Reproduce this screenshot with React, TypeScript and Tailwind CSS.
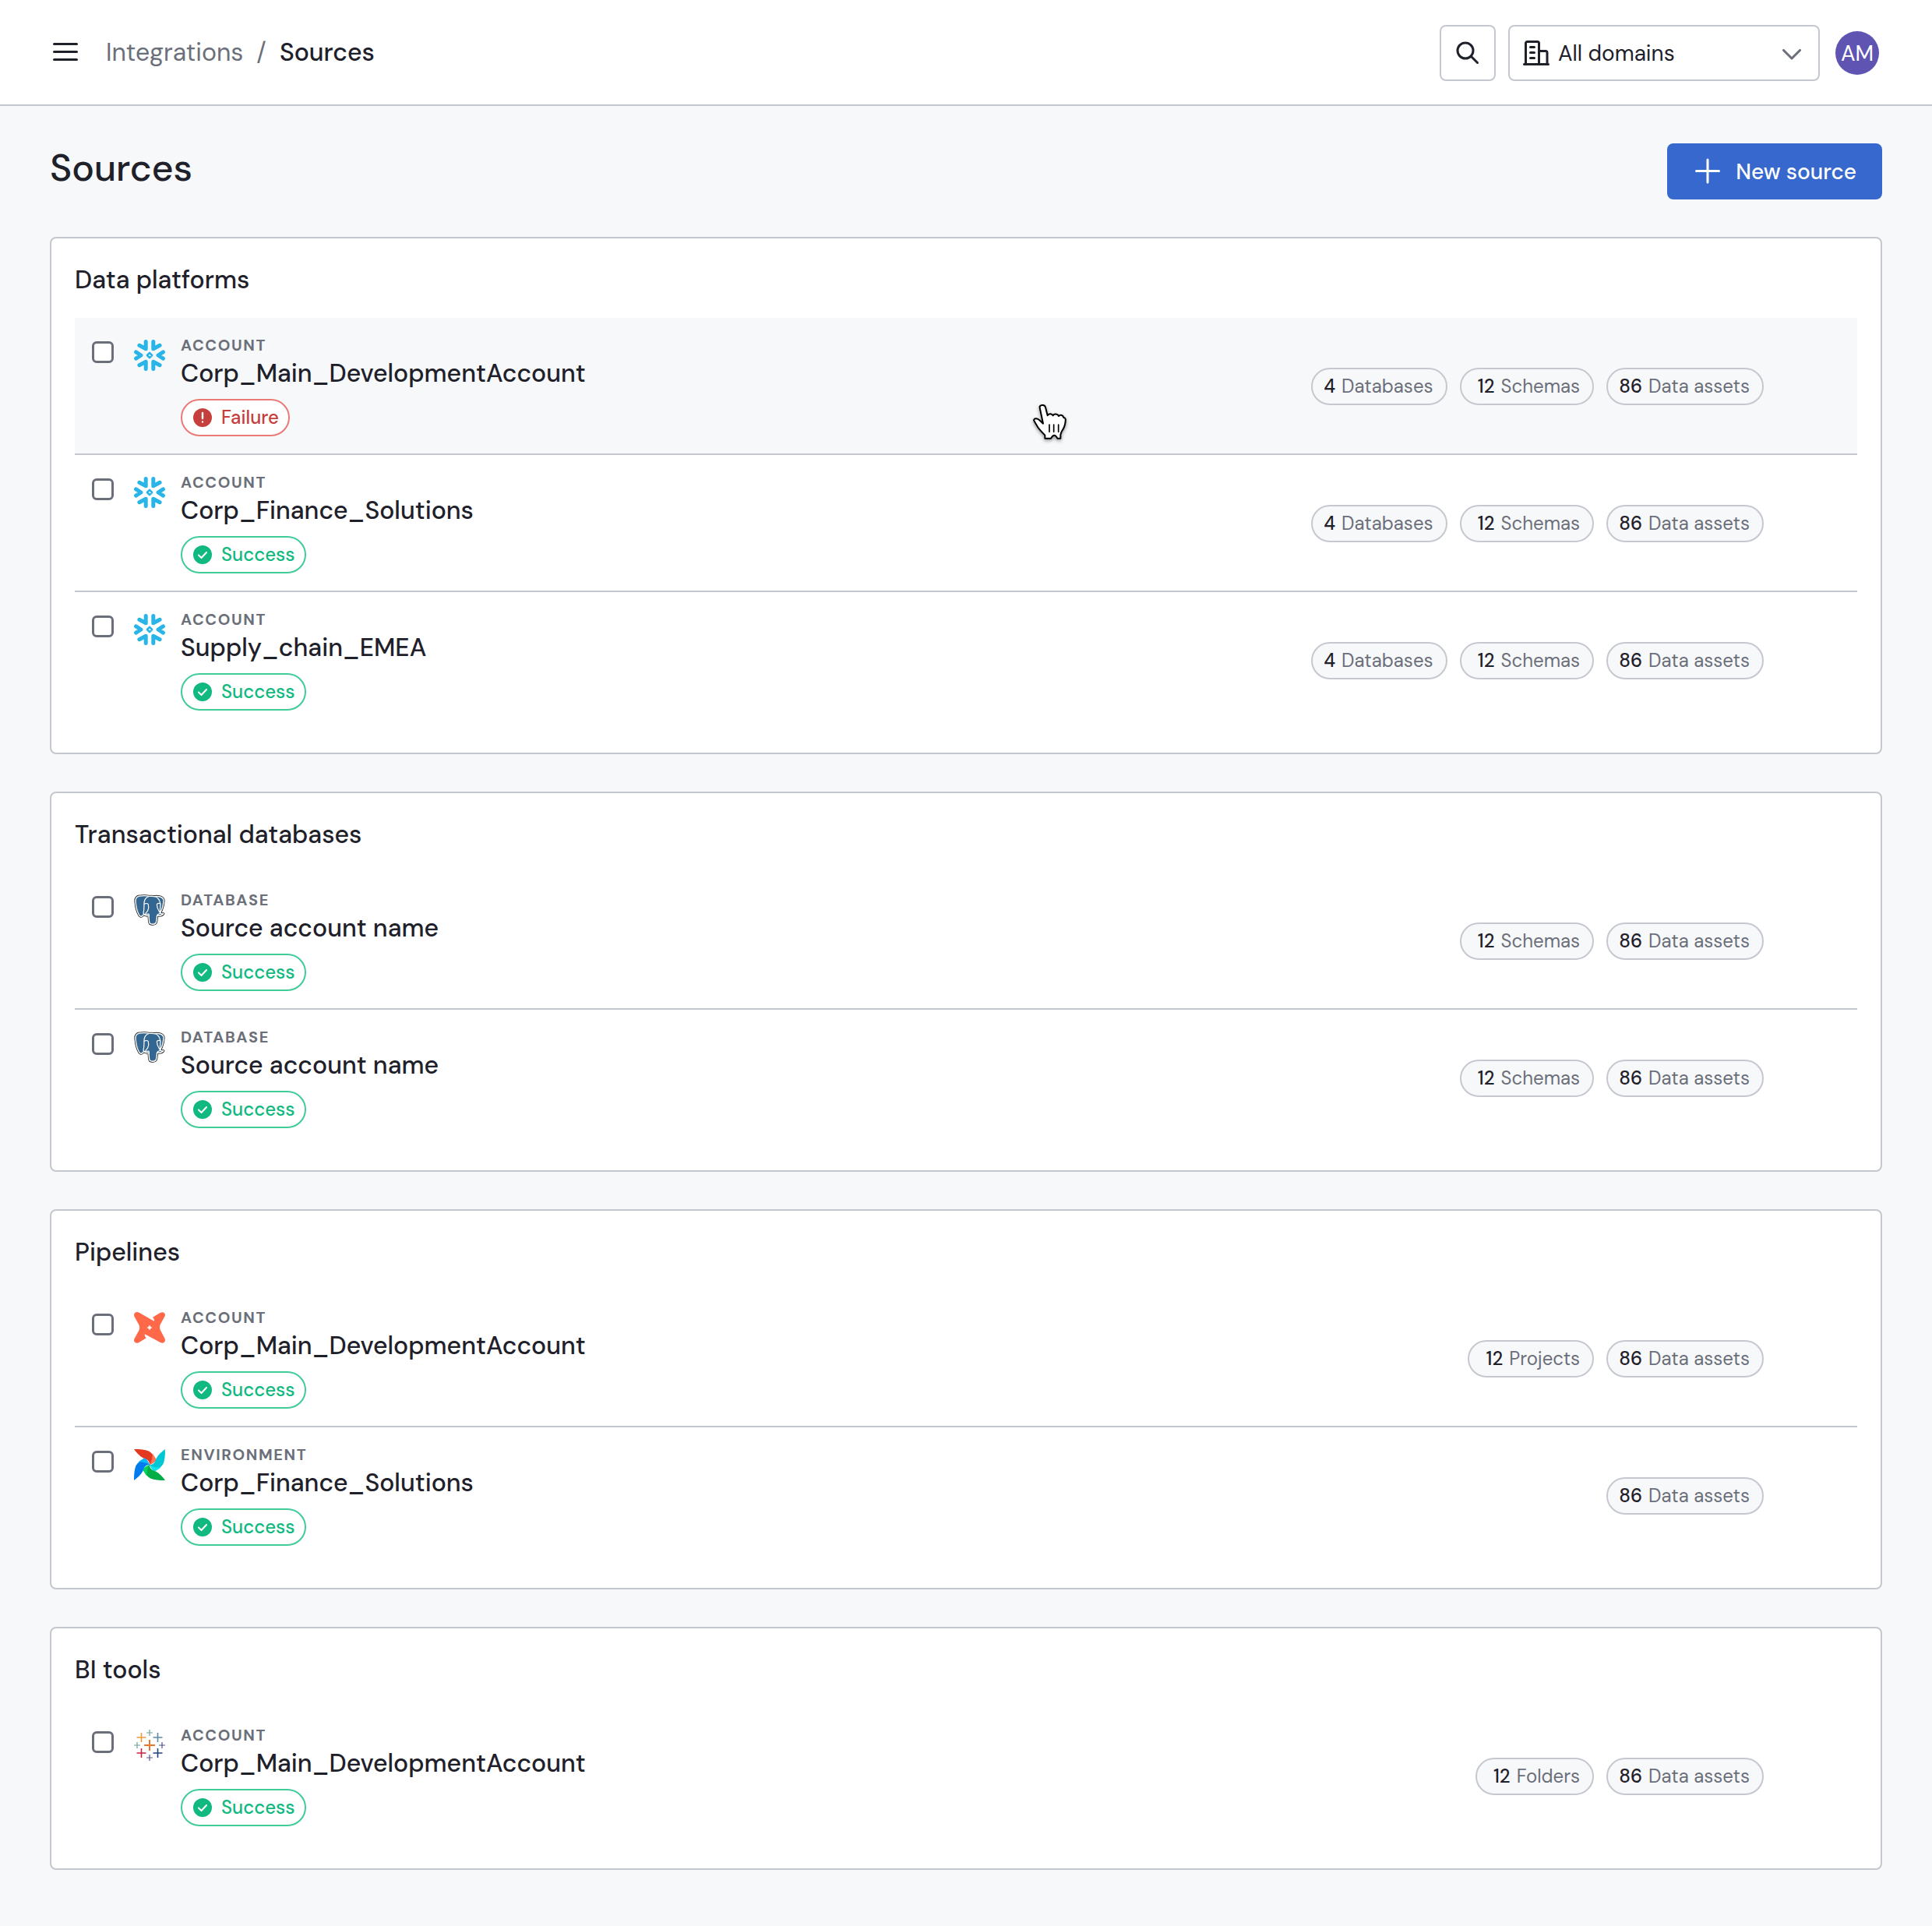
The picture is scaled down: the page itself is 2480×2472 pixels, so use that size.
import React from 'react';

type Status = 'Success' | 'Failure';
type Count = [number, string];
type Source = {
  kind: string;
  name: string;
  status: Status;
  logo: React.ReactNode;
  counts: Count[];
  hovered?: boolean;
};

function SnowflakeLogo() {
  return (
    <svg viewBox="0 0 40 40" className="size-10" fill="none" stroke="#29b5e8" strokeLinecap="round" strokeLinejoin="round" aria-hidden="true">
      <path
        strokeWidth="5"
        d="M15.200 2.500V11.800L6.900 7.300M24.800 2.500V11.800l8.300-4.500M15.200 37.500V28.200L6.900 32.700M24.800 37.500V28.200l8.300 4.500M2.600 15.900 9 20l-6.400 4.100M37.400 15.900 31 20l6.400 4.100"
      />
      <path strokeWidth="2.600" d="m20 16.900 3.100 3.100-3.100 3.100-3.100-3.100Z" />
    </svg>
  );
}

function DbtLogo() {
  return (
    <svg viewBox="0 0 40 40" className="size-10" aria-hidden="true">
      <path
        fill="#ff694a"
        d="M6.200.6 25.800 11.800C26.200 10 25.600 8.200 24 6.800L34 .8c3.800-2 7.400 1.200 5.400 5L34 15.500c-1.300 2.500-1.300 5.500 0 8l5.400 10.200c2 3.800-1.400 7.400-5.200 5.600L13.900 28.200c-.4 1.800.2 3.600 1.900 5L6 39.200c-3.800 2-7.400-1.400-5.400-5.200L6.200 24c1.300-2.500 1.300-5.500 0-8L.6 6C-1.400 2.200 2.400-1.400 6.200.6Z"
      />
      <path fill="#fff" d="M20 17.200c.5 1.500 1.300 2.300 2.800 2.800-1.500.5-2.300 1.300-2.800 2.800-.5-1.500-1.300-2.300-2.800-2.800 1.500-.5 2.300-1.300 2.800-2.800Z" stroke="#fff" strokeWidth=".8" />
    </svg>
  );
}

function PostgresLogo() {
  return (
    <svg viewBox="0 0 40 40" className="size-10" aria-hidden="true">
      <defs>
        <path
          id="pg-body"
          d="M20 2.4C15 1.2 10 1.6 6 2.3 2.6 3.3 1.6 6.5 2 10c.6 6 2.4 13 5 17.2 1.2 1.6 2.8 1.2 4 0l2-1.9c1.3 1.9 3.7 2.4 6 2 .5 3.6-.2 7.6 1.5 10 1.7 1.5 6 1.3 7.6-.8 1.4-2.6 1-6.7 1.5-9.5 3 .4 6.900-.2 8.200-2.300-1.700.3-3.300.1-4.300-.7 2.700-4.500 5-12.500 4.400-17.500-1.800-4-8-4.600-12-3.800-2-.6-4-.6-5.900-.3Z"
        />
      </defs>
      <use href="#pg-body" fill="#000" stroke="#1b1b1b" strokeWidth="3" strokeLinejoin="round" />
      <use href="#pg-body" fill="#336791" stroke="#fff" strokeWidth="1.4" strokeLinejoin="round" />
      <g fill="none" stroke="#fff" strokeWidth="1.2" strokeLinecap="round">
        <path d="M18.500 2.800C14 4.500 13 8 13 12c-.2 4 .2 8-.9 11-.4 1.500.3 2.300 1.200 2.800" />
        <path d="M27 2.500c3.500 1.500 6 5 6.800 9 .4 3-.4 5-.3 8 0 2 .4 3 .2 4.500" />
        <path d="M13.300 12.200c2-.9 4.400-.7 5 .6.900 3 .5 5.500-.6 8-.8 2-2.500 2-2.700 4" />
        <path d="M33.500 11.600c-2-.4-4 .2-4.100 1.300 0 3.600 1.200 6 2.600 8.300.7 1.200 1.400 2 1.600 3" />
        <path d="M13.500 25.400c2 .4 4-.4 5.500-.2.600.6.300 1.600.3 2.500M29.800 27.500c-.1-1.500.5-2.400 3.700-3.200" />
      </g>
    </svg>
  );
}

const blades = [
  { turn: 0, dark: '#e43921', light: '#ff7557' },
  { turn: 90, dark: '#00c7d4', light: '#11e1ee' },
  { turn: 180, dark: '#00ad46', light: '#04d659' },
  { turn: 270, dark: '#017cee', light: '#0cb6ff' },
];

function AirflowLogo() {
  return (
    <svg viewBox="0 0 40 40" className="size-10" aria-hidden="true">
      {blades.map((b) => (
        <g key={b.turn} transform={`rotate(${b.turn} 20 20)`}>
          <path fill={b.dark} d="M0 0c8 0 14 .5 19 2.500 4 2.200 7 7 9.500 11-1 2.800-5 4.800-8.500 6.500 0-5-3-7-8-8.500C7 9 3 4 0 0Z" />
          <path fill={b.light} d="M23.500 5.300c1.800 2.200 3.500 5.500 5 8.200-1 2.800-5 4.800-8.500 6.500 2.800-4 4-9 3.500-14.700Z" />
        </g>
      ))}
    </svg>
  );
}

const crosses = [
  { x: 20, y: 20, arm: 7, w: 2, color: '#eb762c' },
  { x: 9.5, y: 10, arm: 6, w: 1.6, color: '#ee9a3a' },
  { x: 30.5, y: 10, arm: 6, w: 1.6, color: '#5b8ba5' },
  { x: 9.5, y: 30, arm: 6, w: 1.6, color: '#c8243f' },
  { x: 30.5, y: 30, arm: 6, w: 1.6, color: '#1f457f' },
  { x: 20, y: 4, arm: 4, w: 1.2, color: '#6f9da3' },
  { x: 4, y: 20, arm: 4, w: 1.2, color: '#6f9da3' },
  { x: 36, y: 20, arm: 4, w: 1.2, color: '#4a548a' },
  { x: 20, y: 36, arm: 4, w: 1.2, color: '#54578f' },
];

function TableauLogo() {
  return (
    <svg viewBox="0 0 40 40" className="size-10" aria-hidden="true">
      {crosses.map((c) => (
        <path
          key={`${c.x}-${c.y}`}
          d={`M${c.x - c.arm} ${c.y}h${c.arm * 2}M${c.x} ${c.y - c.arm}v${c.arm * 2}`}
          stroke={c.color}
          strokeWidth={c.w}
        />
      ))}
    </svg>
  );
}

function HandCursor() {
  return (
    <svg
      viewBox="72 84 144 144"
      className="pointer-events-none absolute top-[110px] left-1/2 ml-[84px] size-12 drop-shadow-[0_2px_2px_rgba(0,0,0,0.4)]"
      aria-hidden="true"
    >
      <path
        d="M104 100C101 88 123 86 126 98L134 130C138 121 151 122 155 130 160 122 173 123 177 132 184 125 194 129 196 138 203 138 204 145 203 152 202 168 196 181 188 192L184 204V218H172Q166 206 160 206 154 206 147 218H124V206C112 194 98 180 92 167 88 160 82 152 81 147 84 139 96 141 103 148L117 161Z"
        fill="#fff"
        stroke="#000"
        strokeWidth="6"
        strokeLinejoin="round"
      />
      <path d="M141 165v28M158 165v28M176 165v28" stroke="#000" strokeWidth="5" strokeLinecap="round" />
    </svg>
  );
}

const platformCounts: Count[] = [[4, 'Databases'], [12, 'Schemas'], [86, 'Data assets']];
const databaseCounts: Count[] = [[12, 'Schemas'], [86, 'Data assets']];

const sections: { title: string; sources: Source[] }[] = [
  {
    title: 'Data platforms',
    sources: [
      { kind: 'Account', name: 'Corp_Main_DevelopmentAccount', status: 'Failure', logo: <SnowflakeLogo />, counts: platformCounts, hovered: true },
      { kind: 'Account', name: 'Corp_Finance_Solutions', status: 'Success', logo: <SnowflakeLogo />, counts: platformCounts },
      { kind: 'Account', name: 'Supply_chain_EMEA', status: 'Success', logo: <SnowflakeLogo />, counts: platformCounts },
    ],
  },
  {
    title: 'Transactional databases',
    sources: [
      { kind: 'Database', name: 'Source account name', status: 'Success', logo: <PostgresLogo />, counts: databaseCounts },
      { kind: 'Database', name: 'Source account name', status: 'Success', logo: <PostgresLogo />, counts: databaseCounts },
    ],
  },
  {
    title: 'Pipelines',
    sources: [
      {
        kind: 'Account',
        name: 'Corp_Main_DevelopmentAccount',
        status: 'Success',
        logo: <DbtLogo />,
        counts: [[12, 'Projects'], [86, 'Data assets']],
      },
      { kind: 'Environment', name: 'Corp_Finance_Solutions', status: 'Success', logo: <AirflowLogo />, counts: [[86, 'Data assets']] },
    ],
  },
  {
    title: 'BI tools',
    sources: [
      {
        kind: 'Account',
        name: 'Corp_Main_DevelopmentAccount',
        status: 'Success',
        logo: <TableauLogo />,
        counts: [[12, 'Folders'], [86, 'Data assets']],
      },
    ],
  },
];

function StatusBadge({ status }: { status: Status }) {
  const ok = status === 'Success';
  return (
    <span
      className={
        'mt-3 flex h-12 w-fit items-center gap-3 rounded-full border-2 bg-white pr-3 pl-[14px] text-2xl font-medium ' +
        (ok ? 'border-[#41cb99] text-[#11b981]' : 'border-[#e97a75] text-[#c5403c]')
      }
    >
      <svg viewBox="0 0 24 24" className="size-6" fill="none" stroke="#fff" strokeWidth="2" strokeLinecap="round" strokeLinejoin="round" aria-hidden="true">
        <circle cx="12" cy="12" r="12" fill={ok ? '#11b981' : '#c5403c'} stroke="none" />
        {ok ? <path d="m7 12.500 3.500 3.500 6.500-7" /> : <path d="M12 6v7M12 17.500v.1" strokeWidth="2.400" />}
      </svg>
      {status}
    </span>
  );
}

function CountPill({ count, label }: { count: number; label: string }) {
  return (
    <span className="flex h-12 items-center gap-2 rounded-full border-2 border-[#c6c8d0] bg-[#f7f8fa] pr-4 pl-[14px] text-2xl text-[#6b6f7a]">
      <b className={'text-right font-medium text-[#1e202a] tabular-nums ' + (count > 9 ? 'min-w-[29px]' : '')}>{count}</b>
      {label}
    </span>
  );
}

function SourceRow({ source, id, last }: { source: Source; id: string; last: boolean }) {
  return (
    <li
      className={
        'relative flex items-center justify-between pr-[120px] ' +
        (last ? '' : 'shadow-[inset_0_-2px_0_#c6c8d0] ') +
        (source.hovered ? 'bg-[#f7f8fa]' : '')
      }
    >
      <div className="flex items-start pt-6 pb-6 pl-[22px]">
        <input
          id={id}
          type="checkbox"
          className="mt-1.5 size-7 shrink-0 appearance-none rounded-md border-3 border-[#6b6f7a] bg-white checked:bg-[#3668ce]"
        />
        <span className="mt-1 mr-5 ml-[26px] shrink-0">{source.logo}</span>
        <label htmlFor={id} className="block">
          <span className="block text-xl leading-[22px] font-bold tracking-[0.08em] text-[#6b6f7a] uppercase">{source.kind}</span>
          <span className="mt-1 block text-[32px] leading-[42px] font-medium">{source.name}</span>
          <StatusBadge status={source.status} />
        </label>
      </div>
      <div className="flex gap-4">
        {source.counts.map(([n, label]) => (
          <CountPill key={label} count={n} label={label} />
        ))}
      </div>
      {source.hovered && <HandCursor />}
    </li>
  );
}

export default function App() {
  return (
    <div className="min-h-screen bg-[#f7f8fa] font-['DM_Sans',Inter,sans-serif] text-[#1e202a]">
      <header className="flex items-center justify-between border-b-2 border-[#c6c8d0] bg-white pt-8 pr-[68px] pb-[30px] pl-16">
        <div className="flex items-center pb-0.5">
          <button type="button" aria-label="Open menu" className="mr-8 flex">
            <svg viewBox="0 0 40 40" className="size-10" stroke="currentColor" strokeWidth="3" strokeLinecap="round" aria-hidden="true">
              <path d="M5.500 9.500h29M5.500 19.500h29M5.500 29.500h29" />
            </svg>
          </button>
          <nav aria-label="Breadcrumb" className="flex gap-[17px] text-[32px] leading-[42px]">
            <a href="#integrations" className="text-[#6b6f7a]">Integrations</a>
            <span className="text-[#6b6f7a]">/</span>
            <span className="font-medium" aria-current="page">Sources</span>
          </nav>
        </div>
        <div className="flex items-center">
          <button type="button" aria-label="Search" className="mr-4 flex size-[72px] items-center justify-center rounded-lg border-2 border-[#c6c8d0]">
            <svg viewBox="0 0 32 32" className="size-8" fill="none" stroke="currentColor" strokeWidth="3" strokeLinecap="round" aria-hidden="true">
              <circle cx="13" cy="13" r="10" />
              <path d="m20.500 20.500 8 8" />
            </svg>
          </button>
          <div className="relative mr-5">
            <select
              aria-label="Domain"
              className="h-[72px] w-[400px] appearance-none rounded-lg border-2 border-[#c6c8d0] bg-white pt-0.5 pr-16 pl-[62px] text-[28px]"
            >
              <option>All domains</option>
            </select>
            <svg viewBox="0 0 34 32" className="pointer-events-none absolute top-5 left-[19px] h-8 w-[34px]" fill="none" stroke="currentColor" strokeWidth="3" strokeLinecap="round" strokeLinejoin="round" aria-hidden="true">
              <path d="M1.500 30.500h31M3.500 30.500v-27a2 2 0 0 1 2-2h13a2 2 0 0 1 2 2v27M20.500 13.500h8.500a2 2 0 0 1 2 2v15M9.500 8.500h5M9.500 15.500h5M9.500 22.500h5" />
            </svg>
            <svg viewBox="0 0 24 14" className="pointer-events-none absolute top-[31px] right-6 h-[14px] w-6 text-[#6b6f7a]" fill="none" stroke="currentColor" strokeWidth="3" strokeLinecap="round" strokeLinejoin="round" aria-hidden="true">
              <path d="m1.500 1.500 10.500 10.500 10.500-10.500" />
            </svg>
          </div>
          <button type="button" className="flex size-14 items-center justify-center rounded-full bg-[#5f54b2] pt-0.5 text-[28px] text-white">AM</button>
        </div>
      </header>

      <main className="px-16 pt-12 pb-[72px]">
        <div className="flex items-start justify-between">
          <h1 className="text-5xl leading-16 font-medium">Sources</h1>
          <button type="button" className="flex h-[72px] items-center gap-4 rounded-lg bg-[#3668ce] pr-[33px] pl-8 text-[28px] font-medium text-white">
            <svg viewBox="0 0 40 40" className="size-10" stroke="currentColor" strokeWidth="3" strokeLinecap="round" aria-hidden="true">
              <path d="M5.500 19.500h29M20 5v29" />
            </svg>
            <span className="pt-0.5">New source</span>
          </button>
        </div>

        {sections.map((section, s) => (
          <section key={section.title} className="mt-12 rounded-lg border-2 border-[#c6c8d0] bg-white px-[30px] pt-8 pb-[30px]">
            <h2 className="mb-7 text-[32px] leading-[42px] font-medium">{section.title}</h2>
            <ul>
              {section.sources.map((source, i) => (
                <SourceRow key={i} source={source} id={`source-${s}-${i}`} last={i === section.sources.length - 1} />
              ))}
            </ul>
          </section>
        ))}
      </main>
    </div>
  );
}
